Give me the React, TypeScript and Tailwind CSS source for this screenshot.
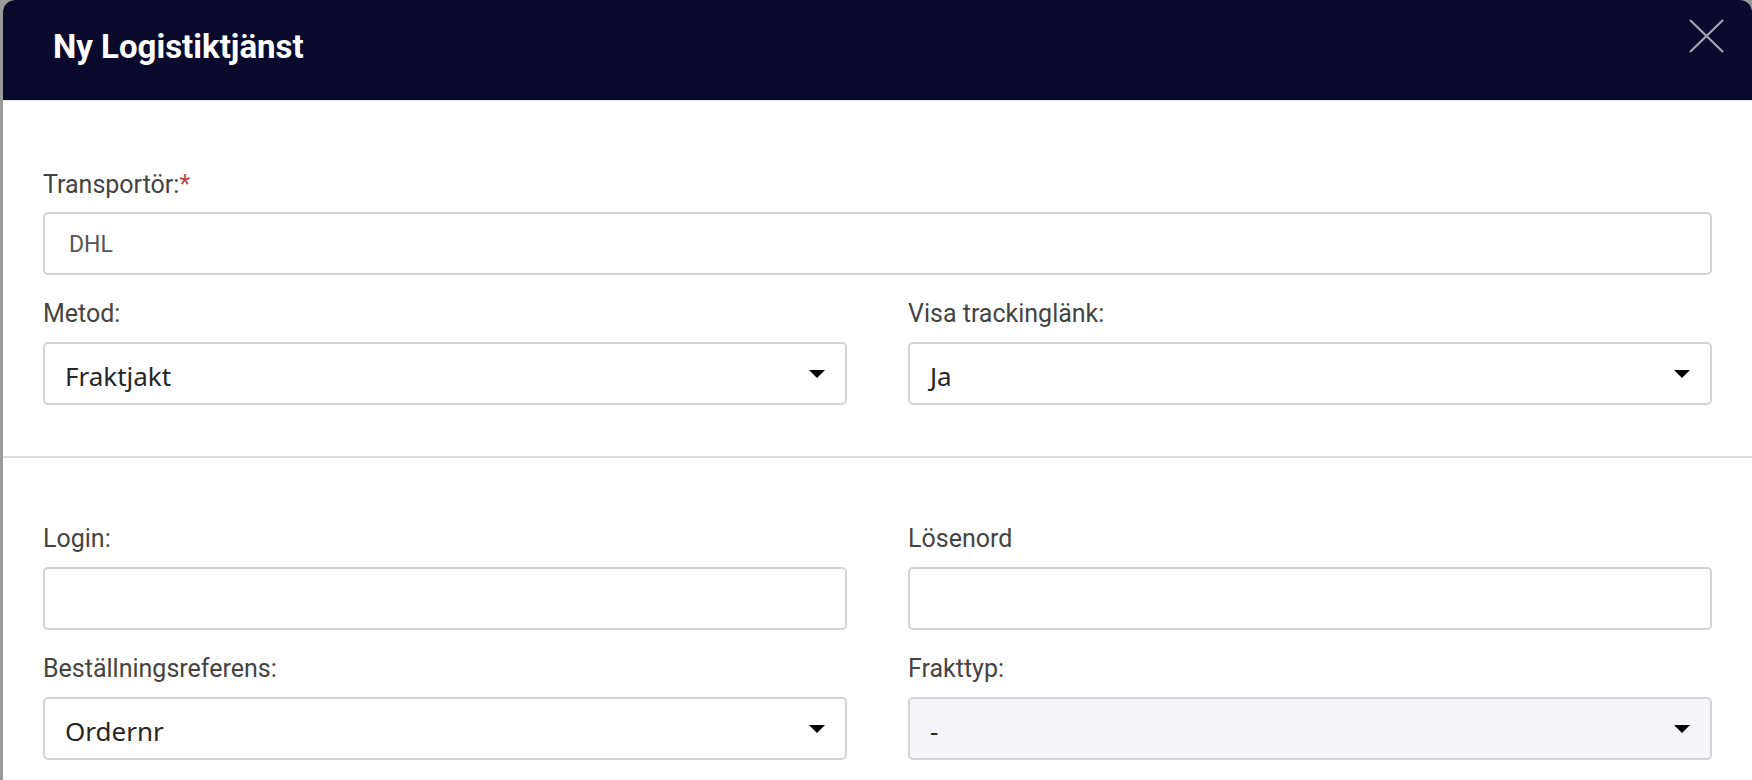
import React from "react";

const labelCls =
  "block h-[28px] text-[25px] leading-[28px] text-[#444] font-['Roboto',sans-serif]";

function Label({ text, required }: { text: string; required?: boolean }) {
  return (
    <label className={labelCls}>
      {text}
      {required && <span className="text-[#b5473f]">*</span>}
    </label>
  );
}

function TextInput({ value }: { value?: string }) {
  return (
    <div className="flex h-[63px] items-center rounded-[5px] border-2 border-[#d3d3d3] bg-white pt-[4px] pl-[24px] font-['Roboto',sans-serif] text-[23px] text-[#555]">
      {value}
    </div>
  );
}

function Select({ value, muted }: { value: string; muted?: boolean }) {
  return (
    <div
      className={`flex h-[63px] items-center justify-between rounded-[5px] border-2 border-[#d3d3d3] pl-[20px] pr-[20px] font-['Noto_Sans',sans-serif] text-[26px] text-[#262626] ${
        muted ? "bg-[#f5f5f9]" : "bg-white"
      }`}
    >
      <span className="pt-[6px]">{value}</span>
      <svg width="16" height="8" viewBox="0 0 16 8" className="shrink-0">
        <path d="M0 0h16L8 8z" fill="#000" />
      </svg>
    </div>
  );
}

function Field({
  label,
  required,
  children,
}: {
  label: string;
  required?: boolean;
  children: React.ReactNode;
}) {
  return (
    <div className="flex flex-col gap-[14px]">
      <Label text={label} required={required} />
      {children}
    </div>
  );
}

export default function App() {
  return (
    <div className="h-[780px] overflow-hidden bg-[#9a9a9a]">
      <div className="ml-[3px] min-h-[780px] overflow-hidden rounded-t-[12px] bg-white">
        {/* Header */}
        <div className="flex h-[101px] items-start justify-between border-b border-[#e6e6e6] bg-[#0a0a2d] pl-[50px] pr-[28px]">
          <h1 className="pt-[28px] font-['Roboto',sans-serif] text-[33px] font-bold leading-[37px] text-white">
            Ny Logistiktjänst
          </h1>
          <button className="mt-[19px] text-[#a3a3b4]">
            <svg width="36" height="34" viewBox="0 0 36 34" fill="none">
              <path
                d="M2 1L35 33M35 1L2 33"
                stroke="currentColor"
                strokeWidth="2.2"
              />
            </svg>
          </button>
        </div>

        {/* Section 1 */}
        <div className="flex flex-col gap-[25px] px-[40px] pt-[70px] pb-[51px]">
          <div className="flex flex-col gap-[13px]">
            <Label text="Transportör:" required />
            <TextInput value="DHL" />
          </div>
          <div className="grid grid-cols-2 gap-x-[61px]">
            <Field label="Metod:">
              <Select value="Fraktjakt" />
            </Field>
            <Field label="Visa trackinglänk:">
              <Select value="Ja" />
            </Field>
          </div>
        </div>

        <div className="h-[2px] bg-[#dedede]" />

        {/* Section 2 */}
        <div className="grid grid-cols-2 gap-x-[61px] gap-y-[25px] px-[40px] pt-[67px]">
          <Field label="Login:">
            <TextInput />
          </Field>
          <Field label="Lösenord">
            <TextInput />
          </Field>
          <Field label="Beställningsreferens:">
            <Select value="Ordernr" />
          </Field>
          <Field label="Frakttyp:">
            <Select value="-" muted />
          </Field>
        </div>
      </div>
    </div>
  );
}
